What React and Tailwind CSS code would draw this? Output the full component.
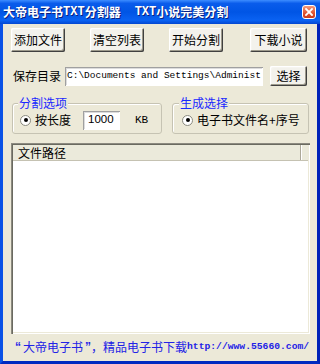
import React from "react";

const cjk = "font-['Noto_Sans_CJK_SC','Noto_Sans',sans-serif]";
const mono = "font-['Liberation_Mono','DejaVu_Sans_Mono',monospace]";

function Btn({ children, className = "" }) {
  return (
    <div
      className={`flex items-center justify-center bg-[#F3F2EC] text-[12px] leading-none text-black rounded-[2px] shadow-[inset_-1px_-1px_#404040,inset_1px_1px_#ffffff,inset_-2px_-2px_#9d9a8c,inset_2px_2px_#f6f5f0] ${cjk} ${className}`}
    >
      {children}
    </div>
  );
}

function Radio() {
  return (
    <div className="w-[11px] h-[11px] rounded-full bg-white border border-[#8a8a80] flex items-center justify-center shrink-0">
      <div className="w-[4px] h-[4px] rounded-full bg-black" />
    </div>
  );
}

export default function App() {
  return (
    <div className={`w-[320px] h-[364px] flex flex-col overflow-hidden bg-[#ECE9D8] ${cjk}`}>
      {/* Title bar */}
      <div className="h-[24px] shrink-0 flex items-center justify-between pl-[3px] pr-[4px] bg-[linear-gradient(to_bottom,#3d8dff_0%,#0a5ceb_14%,#0055e5_50%,#0a62f2_85%,#0447d0_100%)]">
        <div className="flex items-center text-white font-bold text-[12px] leading-none [text-shadow:1px_1px_#0a1f80]">
          <span>大帝电子书</span>
          <span className={`${mono} font-bold`}>TXT</span>
          <span>分割器</span>
          <span className={`${mono} font-bold ml-[14px]`}>TXT</span>
          <span>小说完美分割</span>
        </div>
        <div className="w-[14px] h-[14px] rounded-[3px] border border-white bg-[linear-gradient(to_bottom,#f09a7e,#e0532f_60%,#c8391a)] flex items-center justify-center">
          <svg width="8" height="8" viewBox="0 0 8 8">
            <path d="M1 1 L7 7 M7 1 L1 7" stroke="white" strokeWidth="1.8" strokeLinecap="square" />
          </svg>
        </div>
      </div>

      {/* Body */}
      <div className="flex-1 flex flex-col border-l-[3px] border-l-[#0a52e6] border-r-[3px] border-r-[#0022b8] border-b-[3px] border-b-[#0029c0]">
        {/* Row 1 buttons */}
        <div className="flex mt-[4px] pl-[8px] h-[24px]">
          <Btn className="w-[54px] h-[24px]">添加文件</Btn>
          <Btn className="w-[54px] h-[24px] ml-[25px]">清空列表</Btn>
          <Btn className="w-[54px] h-[24px] ml-[25px]">开始分割</Btn>
          <Btn className="w-[57px] h-[24px] ml-[27px]">下载小说</Btn>
        </div>

        {/* Row 2 save dir */}
        <div className="flex items-center mt-[14px] h-[20px] pl-[10px]">
          <span className="text-[12px] leading-none text-black w-[52px]">保存目录</span>
          <div className="w-[198px] h-[19px] bg-white flex items-center overflow-hidden pl-[2px] shadow-[inset_1px_1px_#a0a0a0,inset_-1px_-1px_#ffffff,inset_2px_2px_#dcdcdc]">
            <span className={`${mono} text-[9.5px] leading-none whitespace-nowrap text-black`}>
              C:\Documents and Settings\Administ
            </span>
          </div>
          <Btn className="w-[37px] h-[20px] ml-[7px]">选择</Btn>
        </div>

        {/* Groups */}
        <div className="flex mt-[11px] pl-[9px]">
          <fieldset className="w-[150px] h-[37px] border border-[#c6c3b3] rounded-[3px] shadow-[inset_1px_1px_#ffffff]">
            <legend className="ml-[5px] px-[1px] text-[12px] leading-[12px] text-[#1a28ff] bg-[#ECE9D8]">分割选项</legend>
            <div className="flex items-center h-[20px] mt-[1px] pl-[7px]">
              <Radio />
              <span className="ml-[4px] text-[12px] leading-none text-black">按长度</span>
              <div className="ml-[12px] w-[37px] h-[19px] bg-white flex items-center pl-[5px] shadow-[inset_1px_1px_#a0a0a0,inset_-1px_-1px_#ffffff,inset_2px_2px_#dcdcdc]">
                <span className="font-['Liberation_Sans',Arial,sans-serif] text-[11.5px] leading-none text-black">1000</span>
              </div>
              <span className={`${mono} ml-[15px] text-[11px] leading-none text-black`}>KB</span>
            </div>
          </fieldset>
          <fieldset className="ml-[10px] w-[137px] h-[37px] border border-[#c6c3b3] rounded-[3px] shadow-[inset_1px_1px_#ffffff]">
            <legend className="ml-[6px] px-[1px] text-[12px] leading-[12px] text-[#1a28ff] bg-[#ECE9D8]">生成选择</legend>
            <div className="flex items-center h-[20px] mt-[1px] pl-[9px]">
              <Radio />
              <span className="ml-[4px] text-[12px] leading-none text-black whitespace-nowrap">电子书文件名+序号</span>
            </div>
          </fieldset>
        </div>

        {/* List view */}
        <div className="ml-[8px] mt-[9px] w-[299px] h-[191px] bg-white flex flex-col shadow-[inset_1px_1px_#8c8a80,inset_2px_2px_#6a6a60,inset_-1px_-1px_#ffffff,inset_-2px_-2px_#ece9d8]">
          <div className="mx-[2px] mt-[2px] h-[16px] flex bg-[#EBEADB] border-b border-b-[#c5c2b2]">
            <div className="w-[288px] h-full flex items-center pl-[5px] border-r border-r-[#aca899] shadow-[1px_0_#ffffff]">
              <span className="text-[12px] leading-none text-black">文件路径</span>
            </div>
            <div className="flex-1" />
          </div>
        </div>

        {/* Footer */}
        <div className="flex-1 flex items-center pl-[12px] pb-[1px] text-[#2222e6] whitespace-nowrap">
          <span className="font-['Liberation_Sans',Arial,sans-serif] font-bold text-[12px] leading-none mr-[2px]">“</span>
          <span className="text-[12px] leading-none">大帝电子书</span>
          <span className="font-['Liberation_Sans',Arial,sans-serif] font-bold text-[12px] leading-none ml-[2px]">”</span>
          <span className="text-[12px] leading-none">，精品电子书下载</span>
          <span className={`${mono} text-[9.7px] leading-none font-bold`}>http://www.55660.com/</span>
        </div>
      </div>
    </div>
  );
}
